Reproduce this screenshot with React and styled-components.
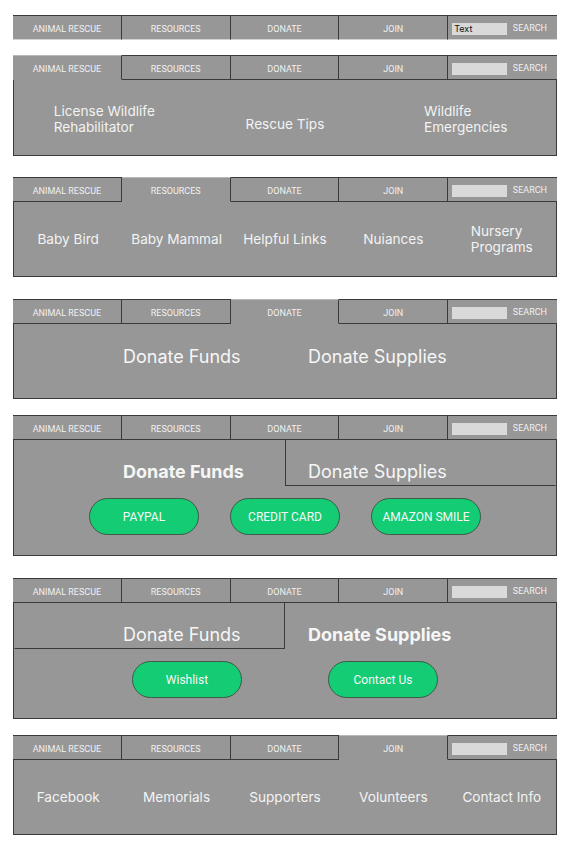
import React from "react";
import styled, { createGlobalStyle } from "styled-components";

const dark = "#3a3a3a";
const grey = "#979797";

const Global = createGlobalStyle`
  * { box-sizing: border-box; }
  body {
    margin: 0;
    background: #ffffff;
    font-family: "Inter", "Roboto", sans-serif;
  }
`;

const Page = styled.div`
  display: flex;
  flex-direction: column;
  width: 574px;
  padding: 15px 17px 10px 13px;
`;

const Widget = styled.section`
  margin-top: ${(p) => p.$gap || 0}px;
  display: flex;
  flex-direction: column;
`;

const TabBar = styled.nav`
  display: grid;
  grid-template-columns: repeat(5, 1fr);
  height: 25px;
  background: ${grey};
`;

const Tab = styled.div`
  display: flex;
  align-items: center;
  justify-content: center;
  padding-top: 2px;
  font-family: "Roboto", sans-serif;
  font-size: 9px;
  color: #f1f1f1;
  text-transform: uppercase;
  border-top: 1px solid ${(p) => (p.$active ? "#b8b8b8" : dark)};
  border-bottom: 1px solid
    ${(p) => (p.$bare ? "#d2d2d2" : p.$active ? "transparent" : dark)};
  border-right: 1px solid ${dark};
`;

const SearchCell = styled.div`
  display: flex;
  align-items: center;
  justify-content: space-between;
  padding: 0 10px 0 4px;
  border-top: 1px solid ${dark};
  border-bottom: 1px solid ${(p) => (p.$bare ? "#d2d2d2" : dark)};
`;

const SearchBox = styled.div`
  width: 55px;
  height: 12px;
  margin-top: 2px;
  background: #d9d9d9;
  font-family: "Inter", sans-serif;
  font-size: 9px;
  line-height: 12px;
  color: #111;
  padding-left: 2px;
`;

const SearchLabel = styled.span`
  font-family: "Roboto", sans-serif;
  font-size: 9px;
  color: #f1f1f1;
`;

const Panel = styled.div`
  height: ${(p) => p.$h}px;
  background: ${grey};
  border: 1px solid ${dark};
  border-top: none;
  display: flex;
  flex-direction: column;
`;

const LinkGrid = styled.div`
  flex: 1;
  display: grid;
  grid-template-columns: repeat(${(p) => p.$cols}, 1fr);
  align-items: center;
  padding-top: ${(p) => p.$drop || 0}px;
`;

const LinkItem = styled.div`
  justify-self: center;
  padding-top: ${(p) => p.$nudge || 0}px;
  font-size: 13.6px;
  line-height: 16.5px;
  color: #f3f3f3;
  white-space: pre-line;
`;

const SplitRow = styled.div`
  display: grid;
  grid-template-columns: 1fr 1fr;
  height: ${(p) => p.$h}px;
`;

const Choice = styled.div`
  display: flex;
  align-items: ${(p) => (p.$mid ? "center" : "flex-end")};
  padding: ${(p) => (p.$side === "left" ? "0 0 0 108px" : "0 0 0 22px")};
  padding-bottom: ${(p) => (p.$mid ? 8 : 2)}px;
  font-size: 18px;
  line-height: 22px;
  font-weight: ${(p) => (p.$selected ? 700 : 400)};
  color: #f6f6f6;
  border-bottom: 1px solid ${(p) => (p.$framed ? dark : "transparent")};
  border-left: 1px solid
    ${(p) => (p.$framed && p.$side === "right" ? dark : "transparent")};
  border-right: 1px solid
    ${(p) => (p.$framed && p.$side === "left" ? dark : "transparent")};
`;

const ButtonRow = styled.div`
  display: flex;
  justify-content: center;
  gap: ${(p) => p.$gap}px;
  margin-top: ${(p) => p.$top}px;
`;

const PillButton = styled.button`
  width: 110px;
  height: 37px;
  border-radius: 19px;
  border: 1px solid #3f5a48;
  background: #13cc74;
  color: #f7f7f7;
  font-family: "Roboto", sans-serif;
  font-size: 12px;
  cursor: pointer;
`;

const tabs = ["Animal Rescue", "Resources", "Donate", "Join"];

function Nav({ active, bare, query }) {
  return (
    <TabBar>
      {tabs.map((t, i) => (
        <Tab key={t} $active={i === active} $bare={bare}>
          {t}
        </Tab>
      ))}
      <SearchCell $bare={bare}>
        <SearchBox>{query}</SearchBox>
        <SearchLabel>SEARCH</SearchLabel>
      </SearchCell>
    </TabBar>
  );
}

function Links({ active, gap, h, drop, items, nudges = [] }) {
  return (
    <Widget $gap={gap}>
      <Nav active={active} />
      <Panel $h={h}>
        <LinkGrid $cols={items.length} $drop={drop}>
          {items.map((it, i) => (
            <LinkItem key={it} $nudge={nudges[i]}>
              {it}
            </LinkItem>
          ))}
        </LinkGrid>
      </Panel>
    </Widget>
  );
}

function Donate({ gap, pick, buttons, btnGap }) {
  const plain = pick === null;
  return (
    <Widget $gap={gap}>
      <Nav active={plain ? 2 : -1} />
      <Panel $h={plain ? 75 : 116}>
        <SplitRow $h={plain ? 74 : 46}>
          <Choice $side="left" $mid={plain} $selected={pick === 0} $framed={pick === 1}>
            Donate Funds
          </Choice>
          <Choice $side="right" $mid={plain} $selected={pick === 1} $framed={pick === 0}>
            Donate Supplies
          </Choice>
        </SplitRow>
        {buttons && (
          <ButtonRow $gap={btnGap} $top={12}>
            {buttons.map((b) => (
              <PillButton key={b}>{b}</PillButton>
            ))}
          </ButtonRow>
        )}
      </Panel>
    </Widget>
  );
}

export default function App() {
  return (
    <Page>
      <Global />
      <Widget>
        <Nav active={-1} bare query="Text" />
      </Widget>
      <Links
        gap={15}
        h={76}
        drop={3}
        active={0}
        nudges={[0, 10, 0]}
        items={["License Wildlife\nRehabilitator", "Rescue Tips", "Wildlife\nEmergencies"]}
      />
      <Links
        gap={21}
        h={75}
        active={1}
        items={["Baby Bird", "Baby Mammal", "Helpful Links", "Nuiances", "Nursery\nPrograms"]}
      />
      <Donate gap={22} pick={null} />
      <Donate
        gap={16}
        pick={0}
        buttons={["PAYPAL", "CREDIT CARD", "AMAZON SMILE"]}
        btnGap={31}
      />
      <Donate gap={22} pick={1} buttons={["Wishlist", "Contact Us"]} btnGap={86} />
      <Links
        gap={16}
        h={75}
        active={3}
        items={["Facebook", "Memorials", "Supporters", "Volunteers", "Contact Info"]}
      />
    </Page>
  );
}
